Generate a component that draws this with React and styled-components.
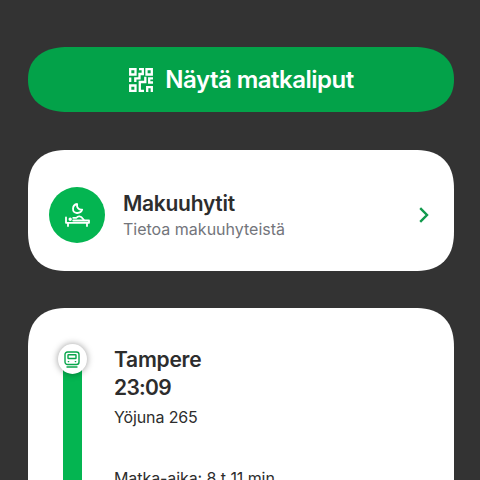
import styled, { createGlobalStyle } from "styled-components";

const GlobalStyle = createGlobalStyle`
  * {
    box-sizing: border-box;
  }

  body {
    margin: 0;
    background: #333333;
    font-family: "Inter", "Liberation Sans", sans-serif;
    color: #2d2d2d;
  }
`;

const Screen = styled.main`
  display: flex;
  flex-direction: column;
  gap: 37.5px;
  height: 480px;
  padding: 47px 26px 0 28px;
  overflow: hidden;
  background: #333333;
`;

const TicketButton = styled.button`
  display: flex;
  flex: none;
  align-items: center;
  justify-content: center;
  gap: 12px;
  height: 65px;
  padding: 0 0 0 1px;
  border: 0;
  border-radius: 36px / 32.5px;
  background: #03a249;
  color: #ffffff;
  font-family: inherit;

  @supports (corner-shape: superellipse(1.2)) {
    border-radius: 40px / 32.5px;
    corner-shape: superellipse(1.2);
  }
`;

const Card = styled.section`
  display: flex;
  flex: none;
  align-items: ${(props) => props.$align || "center"};
  height: ${(props) => props.$height}px;
  border-radius: 35px;
  background: #ffffff;

  @supports (corner-shape: superellipse(1.3)) {
    border-radius: 40px;
    corner-shape: superellipse(1.3);
  }
`;

const Text = styled.span`
  display: block;
  font-size: ${(props) => props.$size}px;
  font-weight: ${(props) => props.$weight || 400};
  line-height: ${(props) => props.$line}px;
  letter-spacing: ${(props) => props.$spacing || 0}px;
  color: ${(props) => props.$color || "inherit"};
  white-space: nowrap;
`;

const RoundIcon = styled.div`
  display: flex;
  align-items: center;
  justify-content: center;
  width: 56px;
  height: 56px;
  margin: 9px 18px 0 21px;
  border-radius: 50%;
  background: #04b551;
`;

const CardText = styled.div`
  flex: 1;
  padding-top: 11px;
`;

const Arrow = styled.svg`
  margin: 9px 25px 0 0;
`;

const Timeline = styled.div`
  display: flex;
  flex-direction: column;
  align-items: center;
  align-self: stretch;
  width: 30px;
  margin-left: 29px;
  padding-top: 36px;
`;

const Stop = styled.div`
  display: flex;
  flex: none;
  align-items: center;
  justify-content: center;
  z-index: 1;
  width: 29px;
  height: 30px;
  border-radius: 50%;
  background: #ffffff;
  box-shadow: 0 0 7px rgba(0, 0, 0, 0.4);
`;

const Track = styled.div`
  flex: 1;
  width: 19px;
  margin-top: -10px;
  background: #04b551;
`;

const Trip = styled.div`
  padding: 38px 0 0 27px;
`;

const Duration = styled.div`
  margin-top: 34px;
`;

const QrIcon = () => (
  <svg width="24" height="24" viewBox="0 0 24 24" fill="none" stroke="currentColor" strokeWidth="2.3">
    <path d="M1.2 1.2h5.3v5.3H1.2zM17.5 1.2h5.3v5.3h-5.3zM1.2 17.5h5.3v5.3H1.2z" />
    <path d="M10 1.2h3.8v4.8h-3.3v4.3H6.3V14M1.2 9.5V14" />
    <path d="M16.3 8.7V14h-5.5v8.8H15M24 10.3h-3.8v4.2H24M18.2 24v-4.8h4.6V24" />
  </svg>
);

const BedIcon = () => (
  <svg width="25" height="24" viewBox="0 0 25 24" fill="none" stroke="#fff" strokeWidth="1.8" strokeLinecap="round" strokeLinejoin="round">
    <path d="M12.2 1c-5.4.8-5.6 8.6-.4 9 2.9.2 4.8-1.3 5.4-3.4-3.2.7-5.9-2.2-5-5.6Z" />
    <path d="M1 14.5v5.3h23v-2.3H8.2M3 20v3M22 20v3" />
    <path d="M8.2 14.8h3.3c1.5-2 4.5-1.8 6 .5l1.5 2" />
    <circle cx="5.2" cy="16.2" r="0.8" />
  </svg>
);

const TrainIcon = () => (
  <svg width="16" height="17" viewBox="0 0 16 17" fill="none" stroke="#08a64b" strokeWidth="1.4" strokeLinecap="round">
    <rect x="1" y="1" width="14" height="12.5" rx="2.5" />
    <rect x="4" y="3.8" width="8" height="3.7" rx="0.5" />
    <path d="M4.3 10.6h.4M11.3 10.6h.4M3 16h10" />
  </svg>
);

const App = () => {
  return (
    <>
      <GlobalStyle />
      <Screen>
        <TicketButton>
          <QrIcon />
          <Text $size={24} $weight={600} $line={30} $spacing={-0.52}>Näytä matkaliput</Text>
        </TicketButton>
        <Card $height={121}>
          <RoundIcon>
            <BedIcon />
          </RoundIcon>
          <CardText>
            <Text $size={21} $weight={600} $line={28} $spacing={-0.28}>Makuuhytit</Text>
            <Text $size={16} $line={23} $color="#73757b">Tietoa makuuhyteistä</Text>
          </CardText>
          <Arrow width="10" height="16" viewBox="0 0 10 16" fill="none" stroke="#119a4d" strokeWidth="2.4">
            <path d="M1.2 1.2L8 8l-6.8 6.8" />
          </Arrow>
        </Card>
        <Card $height={260} $align="flex-start">
          <Timeline>
            <Stop>
              <TrainIcon />
            </Stop>
            <Track />
          </Timeline>
          <Trip>
            <Text $size={21} $weight={600} $line={28} $spacing={-0.25}>Tampere</Text>
            <Text $size={21} $weight={600} $line={28} $spacing={-0.7}>23:09</Text>
            <Text $size={16} $line={31} $spacing={-0.12}>Yöjuna 265</Text>
            <Duration>
              <Text $size={16} $line={22} $spacing={-0.08}>Matka-aika: 8 t 11 min</Text>
            </Duration>
          </Trip>
        </Card>
      </Screen>
    </>
  );
};

export default App;
